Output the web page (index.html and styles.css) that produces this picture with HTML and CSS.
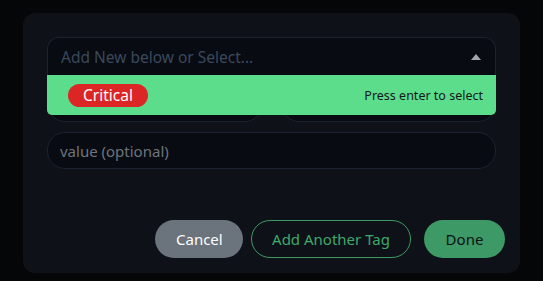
FILE: index.html
```html
<!DOCTYPE html>
<html>
<head>
<meta charset="utf-8">
<link rel="stylesheet" href="styles.css">
</head>
<body>
<div class="modal">
  <div class="fields">
    <div class="select">
      <span class="placeholder">Add New below or Select...</span>
      <svg class="caret" width="10" height="6" viewBox="0 0 10 6"><path d="M0 6 L5 0 L10 6 Z" fill="#a3a6ab"/></svg>
      <div class="menu">
        <span class="pill">Critical</span>
        <span class="hint">Press enter to select</span>
      </div>
    </div>
    <div class="row">
      <div class="input"></div>
      <div class="input"></div>
    </div>
    <div class="input value"><span class="placeholder2">value (optional)</span></div>
  </div>
  <div class="footer">
    <button class="btn cancel">Cancel</button>
    <button class="btn add">Add Another Tag</button>
    <button class="btn done">Done</button>
  </div>
</div>
</body>
</html>
```
FILE: styles.css
```css
html, body {
  margin: 0;
  padding: 0;
  background: #050608;
  height: 281px;
  overflow: hidden;
  font-family: "Noto Sans", "Open Sans", sans-serif;
}
.modal {
  margin: 13px 0 0 23px;
  width: 497px;
  height: 260px;
  box-sizing: border-box;
  background: #0e1117;
  border-radius: 12px;
  padding: 24px 15px 15px 24px;
  display: flex;
  flex-direction: column;
}
.fields {
  width: 449px;
  display: flex;
  flex-direction: column;
  gap: 10px;
}
.select {
  position: relative;
  height: 38px;
  box-sizing: border-box;
  border: 1px solid #1c2330;
  border-bottom: none;
  border-radius: 12px 12px 0 0;
  background: #080b11;
  display: flex;
  align-items: center;
  padding: 0 14px 0 13px;
}
.placeholder {
  flex: 1;
  color: #3a495c;
  font-size: 15.5px;
}
.caret { margin-top: 1px; }
.menu {
  position: absolute;
  top: 37px;
  left: -1px;
  right: -1px;
  height: 40px;
  background: #5cdd8b;
  border-radius: 0 0 5px 5px;
  display: flex;
  align-items: center;
  justify-content: space-between;
  padding: 0 13px 0 21px;
  z-index: 2;
}
.pill {
  background: #dc2626;
  color: #ffffff;
  font-size: 15.5px;
  height: 23px;
  line-height: 23px;
  padding: 0 15px;
  border-radius: 12px;
}
.hint {
  color: #14181d;
  font-size: 12.5px;
}
.row {
  display: grid;
  grid-template-columns: 1fr 1fr;
  gap: 18px;
}
.input {
  height: 37px;
  box-sizing: border-box;
  border: 1px solid #1c2330;
  border-radius: 18px;
  background: #080b11;
}
.value {
  display: flex;
  align-items: center;
  padding-left: 12px;
}
.placeholder2 {
  color: #6e757e;
  font-size: 15px;
}
.footer {
  margin-top: auto;
  display: flex;
  justify-content: flex-end;
  gap: 8px;
}
.btn {
  height: 38px;
  border-radius: 19px;
  font-family: "Noto Sans", "Open Sans", sans-serif;
  font-size: 15px;
  padding: 0 20px;
  box-sizing: border-box;
  border: 1px solid transparent;
  cursor: pointer;
}
.cancel {
  background: #6b737d;
  color: #ffffff;
  width: 88px;
}
.add {
  background: transparent;
  border-color: #3d9a63;
  color: #3fa86b;
  width: 160px;
}
.done {
  background: #3d9966;
  color: #0c1014;
  width: 81px;
  margin-left: 5px;
}
```
